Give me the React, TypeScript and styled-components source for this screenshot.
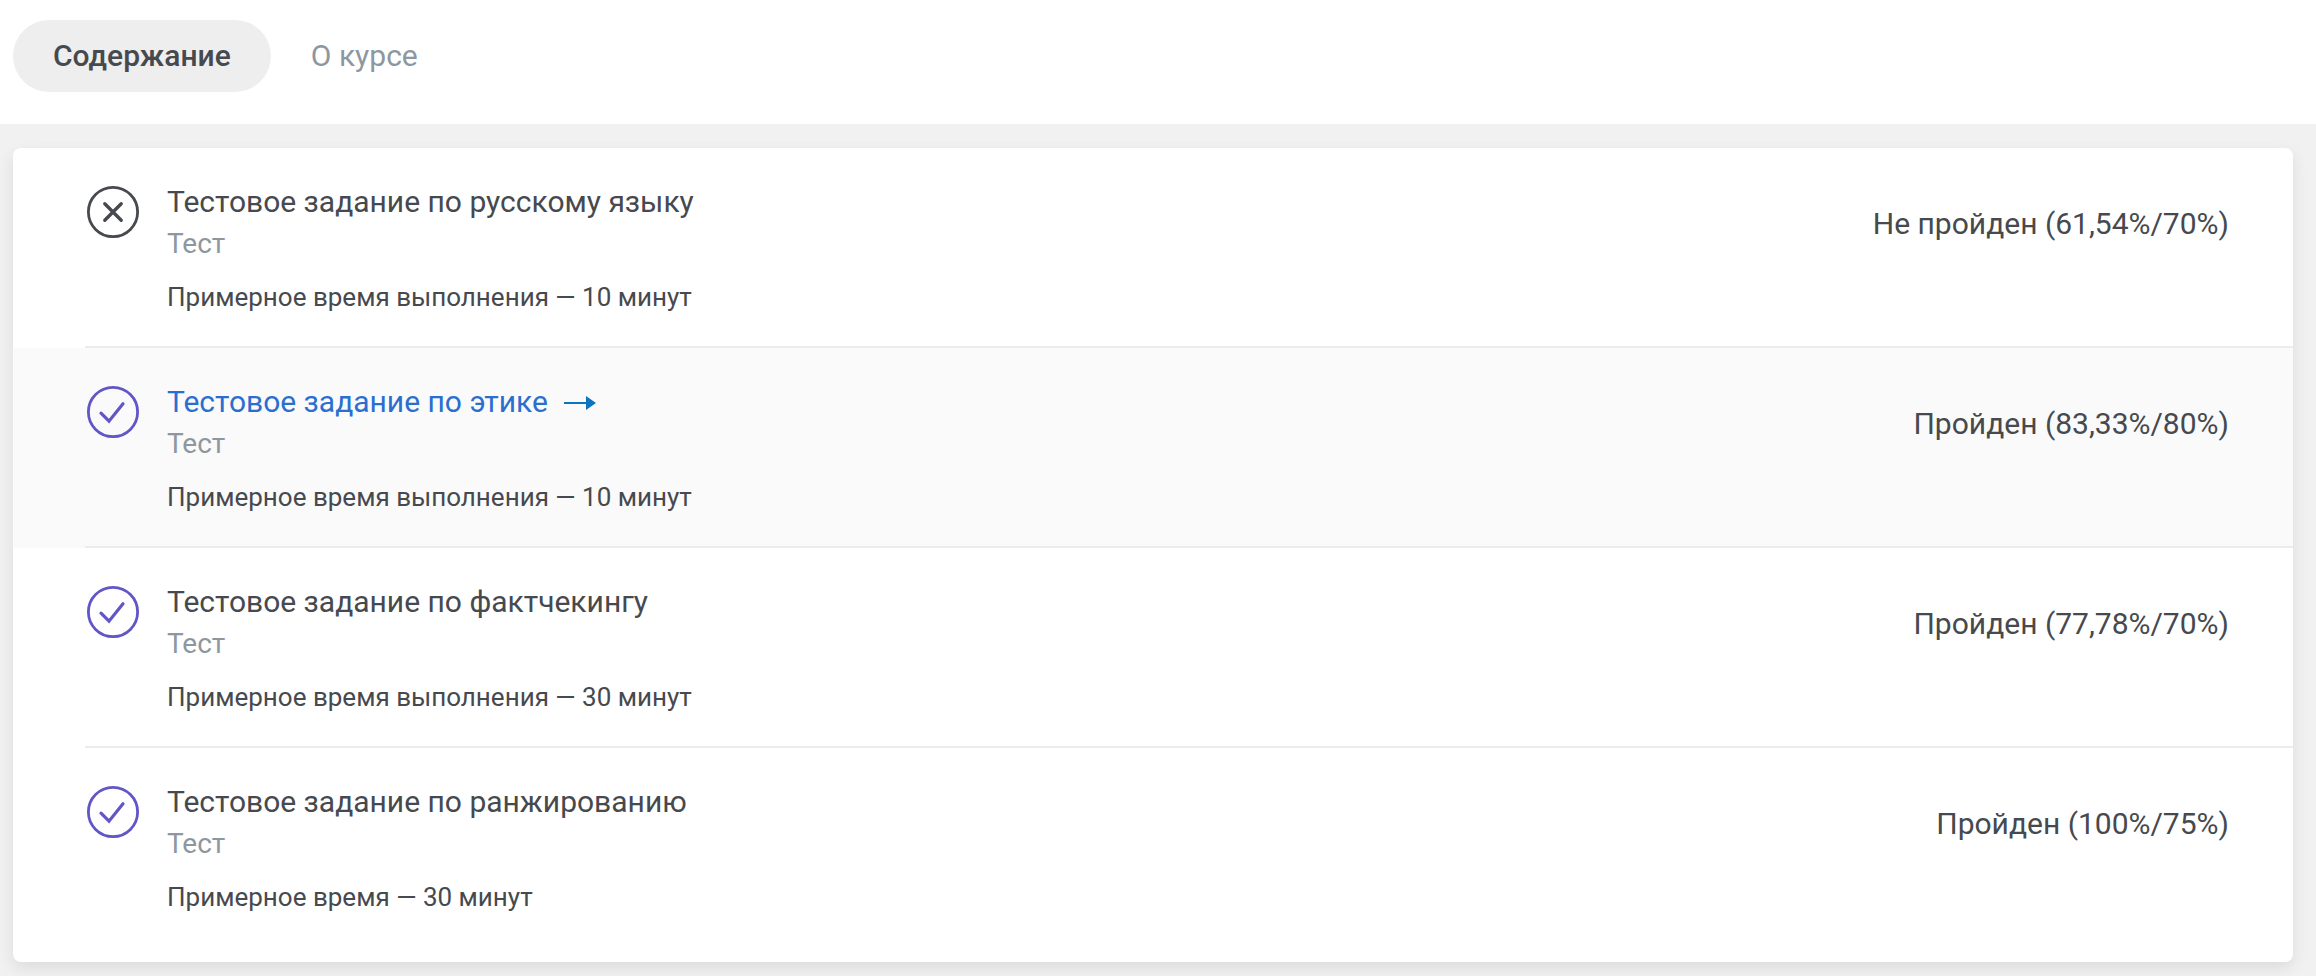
import React from "react";
import styled, { createGlobalStyle } from "styled-components";

const GlobalStyle = createGlobalStyle`
  *, *::before, *::after { box-sizing: border-box; }
  html { background: #f1f1f1; }
  body {
    margin: 0;
    color: #46494e;
    font-family: Roboto, "Liberation Sans", sans-serif;
    font-size: 30px;
  }
`;

const Header = styled.nav`
  display: flex;
  padding: 20px 13px 32px;
  background: #fff;
`;

const Tab = styled.button<{ $active?: boolean }>`
  height: 72px;
  padding: 0 40px 2px;
  border: 0;
  border-radius: 36px;
  background: ${(p) => (p.$active ? "#eee" : "transparent")};
  color: ${(p) => (p.$active ? "#46494e" : "#8d979f")};
  font: inherit;
  font-weight: ${(p) => (p.$active ? 500 : 400)};
  cursor: pointer;
`;

const Content = styled.main`
  padding: 24px 23px 14px 13px;
`;

const Card = styled.ul`
  margin: 0;
  padding: 0 0 14px;
  list-style: none;
  background: #fff;
  border-radius: 8px;
  box-shadow: 0 6px 16px rgba(0, 0, 0, 0.09);
`;

const Row = styled.li<{ $highlighted?: boolean }>`
  padding-left: 72px;
  background: ${(p) => (p.$highlighted ? "#fafafa" : "transparent")};
`;

const RowBody = styled.div<{ $last?: boolean }>`
  display: flex;
  align-items: flex-start;
  padding: 33px 64px 31px 2px;
  border-bottom: 2px solid ${(p) => (p.$last ? "transparent" : "#ececec")};
`;

const StatusIcon = styled.svg`
  flex: none;
  width: 52px;
  height: 52px;
  margin: 5px 28px 0 0;
  fill: none;
`;

const Details = styled.div`
  flex: 1;
  min-width: 0;
`;

const TitleLink = styled.a<{ $highlighted?: boolean }>`
  display: flex;
  align-items: center;
  gap: 16px;
  line-height: 42px;
  color: ${(p) => (p.$highlighted ? "#2a6fd0" : "inherit")};
  text-decoration: none;
`;

const Kind = styled.div`
  font-size: 28px;
  line-height: 42px;
  color: #8d979f;
`;

const Duration = styled.div`
  margin-top: 14px;
  font-size: 26px;
  line-height: 36px;
`;

const Result = styled.div`
  margin-top: 22px;
  line-height: 42px;
  white-space: nowrap;
`;

const PassedIcon = () => (
  <StatusIcon viewBox="0 0 52 52" role="img" aria-label="Пройден">
    <circle cx="26" cy="26" r="24.6" stroke="#6156c8" strokeWidth="2.8" />
    <path d="M14 27.2 22 35.2 36 17.8" stroke="#6156c8" strokeWidth="3.2" strokeLinecap="round" />
  </StatusIcon>
);

const FailedIcon = () => (
  <StatusIcon viewBox="0 0 52 52" role="img" aria-label="Не пройден">
    <circle cx="26" cy="26" r="24.6" stroke="#46494e" strokeWidth="2.8" />
    <path d="M17.8 17.8 34.2 34.2M34.2 17.8 17.8 34.2" stroke="#46494e" strokeWidth="3.4" strokeLinecap="round" />
  </StatusIcon>
);

const Arrow = () => (
  <svg width="32" height="16" viewBox="0 0 32 16" fill="#0a74be" aria-hidden="true">
    <path d="M0 8H22V2L32 9 22 16V10H0Z" />
  </svg>
);

interface Task {
  title: string;
  duration: string;
  result: string;
  passed: boolean;
  highlighted?: boolean;
}

const tasks: Task[] = [
  {
    title: "Тестовое задание по русскому языку",
    duration: "Примерное время выполнения — 10 минут",
    result: "Не пройден (61,54%/70%)",
    passed: false,
  },
  {
    title: "Тестовое задание по этике",
    duration: "Примерное время выполнения — 10 минут",
    result: "Пройден (83,33%/80%)",
    passed: true,
    highlighted: true,
  },
  {
    title: "Тестовое задание по фактчекингу",
    duration: "Примерное время выполнения — 30 минут",
    result: "Пройден (77,78%/70%)",
    passed: true,
  },
  {
    title: "Тестовое задание по ранжированию",
    duration: "Примерное время — 30 минут",
    result: "Пройден (100%/75%)",
    passed: true,
  },
];

export default function App() {
  return (
    <>
      <GlobalStyle />
      <Header>
        <Tab type="button" $active>Содержание</Tab>
        <Tab type="button">О курсе</Tab>
      </Header>
      <Content>
        <Card>
          {tasks.map((task, index) => (
            <Row key={task.title} $highlighted={task.highlighted}>
              <RowBody $last={index === tasks.length - 1}>
                {task.passed ? <PassedIcon /> : <FailedIcon />}
                <Details>
                  <TitleLink href="#" $highlighted={task.highlighted}>
                    {task.title}
                    {task.highlighted && <Arrow />}
                  </TitleLink>
                  <Kind>Тест</Kind>
                  <Duration>{task.duration}</Duration>
                </Details>
                <Result>{task.result}</Result>
              </RowBody>
            </Row>
          ))}
        </Card>
      </Content>
    </>
  );
}
